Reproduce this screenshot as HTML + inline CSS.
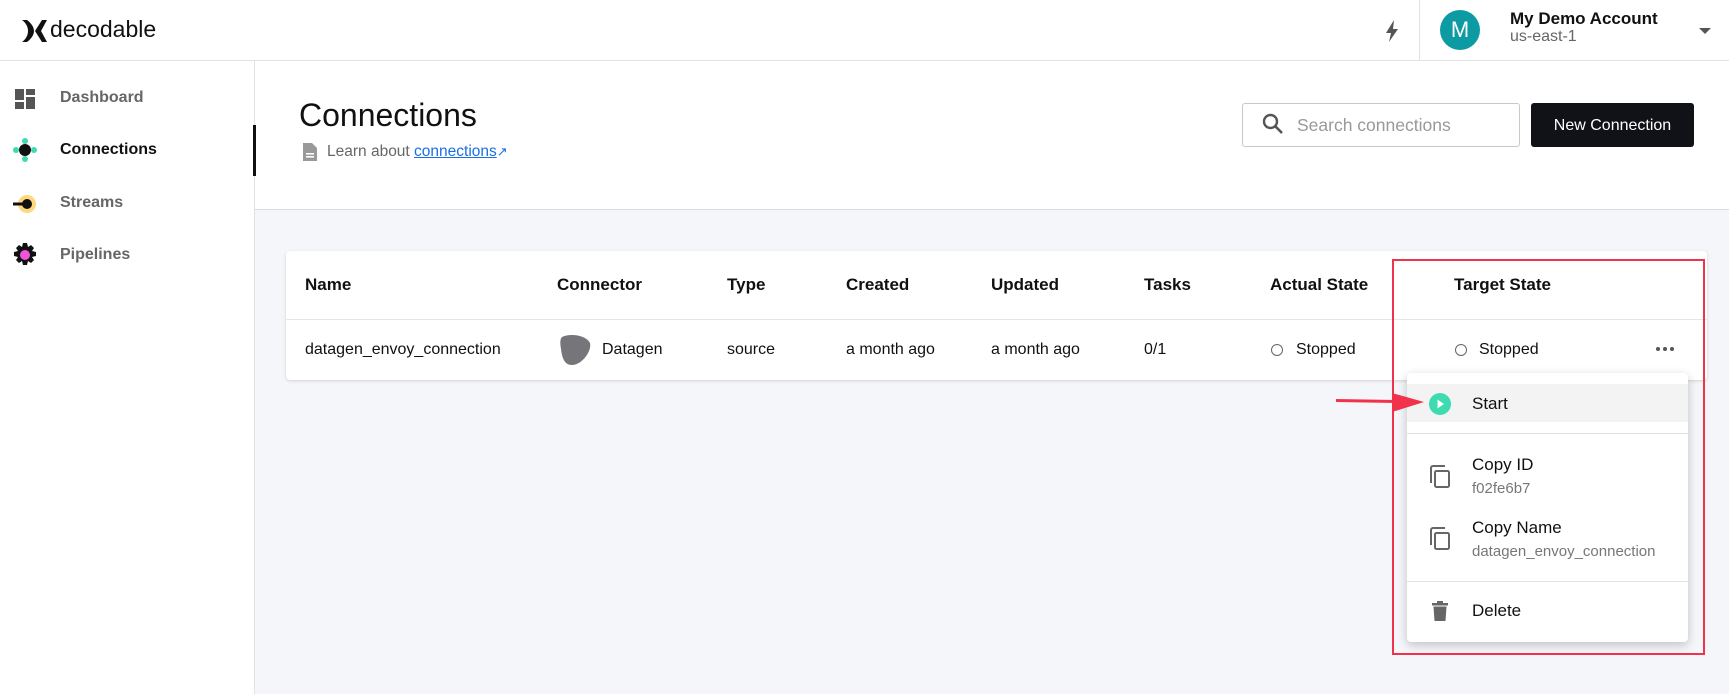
<!DOCTYPE html>
<html><head><meta charset="utf-8"><style>
*{box-sizing:border-box;margin:0;padding:0}
body{width:1729px;height:694px;overflow:hidden;font-family:"Liberation Sans",sans-serif;background:#f5f6f9;position:relative;color:#111}
.a{position:absolute;white-space:nowrap}
</style></head><body>
<div class="a" style="left:0;top:0;width:1729px;height:61px;background:#fff;border-bottom:1px solid #e2e2e2"></div>
<div class="a" style="left:0;top:61px;width:255px;height:633px;background:#fff;border-right:1px solid #e2e2e2"></div>
<div class="a" style="left:255px;top:61px;width:1474px;height:149px;background:#fff;border-bottom:1px solid #dcdcdc"></div>
<!-- logo -->
<svg class="a" style="left:22px;top:20px" width="26" height="22" viewBox="0 0 26 22"><path d="M0 0h5c4 3 7 7 7 11s-3 8-7 11H0c4-3 6-7 6-11S4 3 0 0z M13 11l7-11h5l-6 11 6 11h-5z" fill="#111"/></svg>
<div class="a" style="left:50px;top:16px;font-size:23px;color:#111">decodable</div>
<!-- topbar right -->
<svg class="a" style="left:1385px;top:20px" width="14" height="22" viewBox="0 0 14 22"><path d="M9 0L1 13h5l-2 9 9-13H8z" fill="#555"/></svg>
<div class="a" style="left:1419px;top:0;width:1px;height:61px;background:#e2e2e2"></div>
<div class="a" style="left:1440px;top:10px;width:40px;height:40px;border-radius:50%;background:#0c9aa3;color:#fff;font-size:22px;text-align:center;line-height:40px">M</div>
<div class="a" style="left:1510px;top:9px;font-size:17px;font-weight:bold;color:#111">My Demo Account</div>
<div class="a" style="left:1510px;top:28px;font-size:16px;color:#666">us-east-1</div>
<div class="a" style="left:1699px;top:28px;border-left:6px solid transparent;border-right:6px solid transparent;border-top:6px solid #555"></div>
<!-- nav -->
<svg class="a" style="left:15px;top:89px" width="20" height="20" viewBox="0 0 20 20" fill="#555"><rect x="0" y="0" width="9" height="11"/><rect x="11" y="0" width="9" height="6"/><rect x="0" y="13" width="9" height="7"/><rect x="11" y="8" width="9" height="12"/></svg>
<div class="a" style="left:60px;top:89px;font-size:16px;font-weight:bold;color:#666">Dashboard</div>
<svg class="a" style="left:13px;top:138px" width="24" height="24" viewBox="0 0 24 24"><circle cx="12" cy="3" r="3" fill="#3ddbb0"/><circle cx="12" cy="21" r="3" fill="#3ddbb0"/><circle cx="3" cy="12" r="3" fill="#3ddbb0"/><circle cx="21" cy="12" r="3" fill="#3ddbb0"/><circle cx="12" cy="12" r="6" fill="#111"/></svg>
<div class="a" style="left:60px;top:141px;font-size:16px;font-weight:bold;color:#111">Connections</div>
<div class="a" style="left:253px;top:125px;width:3px;height:51px;background:#111"></div>
<svg class="a" style="left:13px;top:192px" width="24" height="24" viewBox="0 0 24 24"><circle cx="14" cy="12" r="9" fill="#fcd97a"/><rect x="0" y="10.5" width="12" height="3" fill="#111"/><circle cx="14" cy="12" r="5" fill="#111"/></svg>
<div class="a" style="left:60px;top:194px;font-size:16px;font-weight:bold;color:#666">Streams</div>
<svg class="a" style="left:13px;top:243px" width="24" height="24" viewBox="0 0 24 24"><path d="M10 0h4l1 4 3-2 3 3-2 3 4 1v4l-4 1 2 3-3 3-3-2-1 4h-4l-1-4-3 2-3-3 2-3-4-1v-4l4-1-2-3 3-3 3 2z" fill="#111"/><circle cx="12" cy="12" r="5" fill="#ee55d8"/></svg>
<div class="a" style="left:60px;top:246px;font-size:16px;font-weight:bold;color:#666">Pipelines</div>
<!-- page header -->
<div class="a" style="left:299px;top:97px;font-size:32px;color:#111">Connections</div>
<svg class="a" style="left:303px;top:143px" width="14" height="18" viewBox="0 0 14 18"><path d="M0 0h9l5 5v13H0z" fill="#999"/><rect x="3" y="10" width="8" height="1.6" fill="#fff"/><rect x="3" y="13" width="8" height="1.6" fill="#fff"/></svg>
<div class="a" style="left:327px;top:143px;font-size:15.5px;color:#666">Learn about <span style="color:#1a6fe8;text-decoration:underline">connections</span><span style="color:#1a6fe8;font-size:13px">&#x2197;</span></div>
<div class="a" style="left:1242px;top:103px;width:278px;height:44px;background:#fff;border:1px solid #c8c8c8;border-radius:3px"></div>
<svg class="a" style="left:1262px;top:113px" width="22" height="22" viewBox="0 0 22 22"><circle cx="8.5" cy="8.5" r="6.5" fill="none" stroke="#555" stroke-width="2.4"/><path d="M13.5 13.5l6.5 6.5" stroke="#555" stroke-width="2.6"/></svg>
<div class="a" style="left:1297px;top:115px;font-size:17.5px;color:#999">Search connections</div>
<div class="a" style="left:1531px;top:103px;width:163px;height:44px;background:#111218;border-radius:3px;color:#fff;font-size:16px;text-align:center;line-height:46px">New Connection</div>
<!-- table -->
<div class="a" style="left:286px;top:251px;width:1421px;height:129px;background:#fff;border-radius:4px;box-shadow:0 1px 3px rgba(0,0,0,.15)"></div>
<div class="a" style="left:286px;top:319px;width:1421px;height:1px;background:#e5e5e5"></div>
<div class="a" style="top:275px;left:0;font-size:17px;font-weight:bold;color:#111">
<span class="a" style="left:305px">Name</span><span class="a" style="left:557px">Connector</span><span class="a" style="left:727px">Type</span><span class="a" style="left:846px">Created</span><span class="a" style="left:991px">Updated</span><span class="a" style="left:1144px">Tasks</span><span class="a" style="left:1270px">Actual State</span><span class="a" style="left:1454px">Target State</span></div>
<div class="a" style="top:341px;left:0;font-size:16px;color:#111">
<span class="a" style="left:305px">datagen_envoy_connection</span><span class="a" style="left:602px">Datagen</span><span class="a" style="left:727px">source</span><span class="a" style="left:846px">a month ago</span><span class="a" style="left:991px">a month ago</span><span class="a" style="left:1144px">0/1</span><span class="a" style="left:1296px">Stopped</span><span class="a" style="left:1479px">Stopped</span></div>
<svg class="a" style="left:558px;top:333px" width="34" height="34" viewBox="0 0 34 34"><path d="M4 4C12 0 28 2 32 10 34 18 24 32 14 32 6 32 4 24 3 16 2 10 2 6 4 4z" fill="#76767a"/></svg>
<div class="a" style="left:1271px;top:344px;width:12px;height:12px;border:1.3px solid #666;border-radius:50%"></div>
<div class="a" style="left:1455px;top:344px;width:12px;height:12px;border:1.3px solid #666;border-radius:50%"></div>
<svg class="a" style="left:1655px;top:346px" width="20" height="6" viewBox="0 0 20 6" fill="#555"><circle cx="3" cy="3" r="2"/><circle cx="10" cy="3" r="2"/><circle cx="17" cy="3" r="2"/></svg>
<!-- menu -->
<div class="a" style="left:1407px;top:373px;width:281px;height:269px;background:#fff;border-radius:4px;box-shadow:0 3px 10px rgba(0,0,0,.22)"></div>
<div class="a" style="left:1407px;top:384px;width:281px;height:38px;background:#f3f3f3"></div>
<svg class="a" style="left:1429px;top:393px" width="22" height="22" viewBox="0 0 22 22"><circle cx="11" cy="11" r="11" fill="#3ddbb0"/><path d="M8.5 6.5l6.5 4.5-6.5 4.5z" fill="#fff"/></svg>
<div class="a" style="left:1472px;top:394px;font-size:17px;color:#111">Start</div>
<div class="a" style="left:1407px;top:433px;width:281px;height:1px;background:#e3e3e3"></div>
<svg class="a" style="left:1429px;top:465px" width="22" height="24" viewBox="0 0 22 24" fill="none" stroke="#666" stroke-width="2"><path d="M2 18V3a2 2 0 0 1 2-2h12"/><rect x="6" y="6" width="14" height="16" rx="1.5"/></svg>
<div class="a" style="left:1472px;top:455px;font-size:17px;color:#111">Copy ID</div>
<div class="a" style="left:1472px;top:480px;font-size:15px;color:#777">f02fe6b7</div>
<svg class="a" style="left:1429px;top:527px" width="22" height="24" viewBox="0 0 22 24" fill="none" stroke="#666" stroke-width="2"><path d="M2 18V3a2 2 0 0 1 2-2h12"/><rect x="6" y="6" width="14" height="16" rx="1.5"/></svg>
<div class="a" style="left:1472px;top:518px;font-size:17px;color:#111">Copy Name</div>
<div class="a" style="left:1472px;top:543px;font-size:15px;color:#777">datagen_envoy_connection</div>
<div class="a" style="left:1407px;top:581px;width:281px;height:1px;background:#e3e3e3"></div>
<svg class="a" style="left:1432px;top:601px" width="16" height="20" viewBox="0 0 16 20" fill="#666"><rect x="0" y="2" width="16" height="2.5"/><rect x="5" y="0" width="6" height="3"/><path d="M1.5 5.5h13l-1 14.5h-11z"/></svg>
<div class="a" style="left:1472px;top:601px;font-size:17px;color:#111">Delete</div>
<!-- red box and arrow -->
<div class="a" style="left:1392px;top:259px;width:313px;height:396px;border:2.5px solid #f0334a"></div>
<svg class="a" style="left:1334px;top:392px" width="92" height="22" viewBox="0 0 92 22"><path d="M2 8.5L62 9.5" stroke="#f0334a" stroke-width="3"/><path d="M58 1L90 10 58 20z" fill="#f0334a"/></svg>
</body></html>
